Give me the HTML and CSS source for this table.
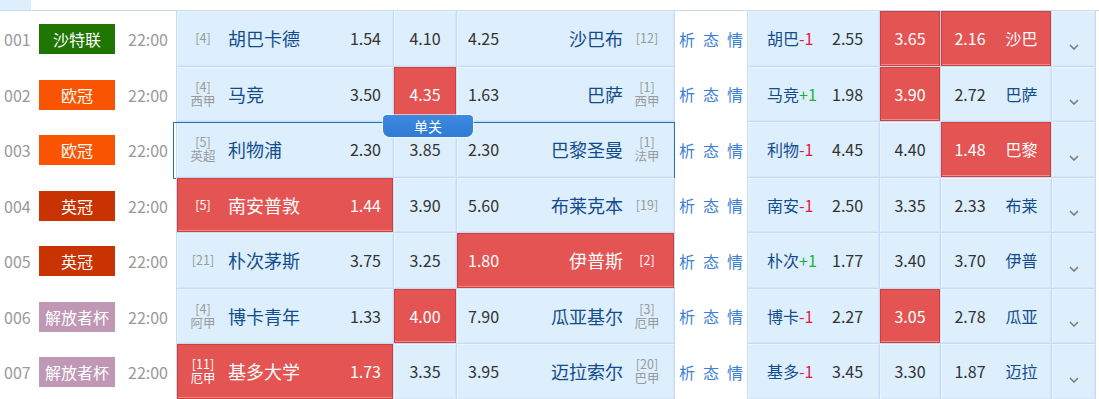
FILE: index.html
```html
<!DOCTYPE html>
<html lang="zh-CN">
<head>
<meta charset="utf-8">
<title>赛程</title>
<link rel="stylesheet" href="styles.css">
</head>
<body>
<div class="page">
  <div class="top"><div class="top-tab"></div></div>
  <div class="board">

    <div class="row">
      <div class="num">001</div>
      <div class="league"><span class="badge lg-green">沙特联</span></div>
      <div class="time">22:00</div>
      <div class="cell home"><span class="rank"><i>[4]</i></span><span class="team">胡巴卡德</span><span class="odds">1.54</span></div>
      <div class="cell draw">4.10</div>
      <div class="cell away"><span class="odds">4.25</span><span class="team">沙巴布</span><span class="rank"><i>[12]</i></span></div>
      <div class="links"><a>析</a><a>态</a><a>情</a></div>
      <div class="cell hh"><span class="hname">胡巴<em class="neg">-1</em></span><span>2.55</span></div>
      <div class="cell hdraw red">3.65</div>
      <div class="cell haway red"><span>2.16</span><span class="hteam">沙巴</span></div>
      <div class="cell more"><svg width="10" height="6" viewBox="0 0 10 6"><polyline points="1,1 5,5 9,1"/></svg></div>
    </div>

    <div class="row">
      <div class="num">002</div>
      <div class="league"><span class="badge lg-orange">欧冠</span></div>
      <div class="time">22:00</div>
      <div class="cell home"><span class="rank"><i>[4]</i><i>西甲</i></span><span class="team">马竞</span><span class="odds">3.50</span></div>
      <div class="cell draw red">4.35</div>
      <div class="cell away"><span class="odds">1.63</span><span class="team">巴萨</span><span class="rank"><i>[1]</i><i>西甲</i></span></div>
      <div class="links"><a>析</a><a>态</a><a>情</a></div>
      <div class="cell hh"><span class="hname">马竞<em class="pos">+1</em></span><span>1.98</span></div>
      <div class="cell hdraw red">3.90</div>
      <div class="cell haway"><span>2.72</span><span class="hteam">巴萨</span></div>
      <div class="cell more"><svg width="10" height="6" viewBox="0 0 10 6"><polyline points="1,1 5,5 9,1"/></svg></div>
    </div>

    <div class="row selected">
      <div class="num">003</div>
      <div class="league"><span class="badge lg-orange">欧冠</span></div>
      <div class="time">22:00</div>
      <div class="cell home"><span class="rank"><i>[5]</i><i>英超</i></span><span class="team">利物浦</span><span class="odds">2.30</span></div>
      <div class="cell draw">3.85</div>
      <div class="cell away"><span class="odds">2.30</span><span class="team">巴黎圣曼</span><span class="rank"><i>[1]</i><i>法甲</i></span></div>
      <div class="links"><a>析</a><a>态</a><a>情</a></div>
      <div class="cell hh"><span class="hname">利物<em class="neg">-1</em></span><span>4.45</span></div>
      <div class="cell hdraw">4.40</div>
      <div class="cell haway red"><span>1.48</span><span class="hteam">巴黎</span></div>
      <div class="cell more"><svg width="10" height="6" viewBox="0 0 10 6"><polyline points="1,1 5,5 9,1"/></svg></div>
      <div class="sel-frame"></div>
      <div class="single">单关</div>
    </div>

    <div class="row">
      <div class="num">004</div>
      <div class="league"><span class="badge lg-brick">英冠</span></div>
      <div class="time">22:00</div>
      <div class="cell home red"><span class="rank"><i>[5]</i></span><span class="team">南安普敦</span><span class="odds">1.44</span></div>
      <div class="cell draw">3.90</div>
      <div class="cell away"><span class="odds">5.60</span><span class="team">布莱克本</span><span class="rank"><i>[19]</i></span></div>
      <div class="links"><a>析</a><a>态</a><a>情</a></div>
      <div class="cell hh"><span class="hname">南安<em class="neg">-1</em></span><span>2.50</span></div>
      <div class="cell hdraw">3.35</div>
      <div class="cell haway"><span>2.33</span><span class="hteam">布莱</span></div>
      <div class="cell more"><svg width="10" height="6" viewBox="0 0 10 6"><polyline points="1,1 5,5 9,1"/></svg></div>
    </div>

    <div class="row">
      <div class="num">005</div>
      <div class="league"><span class="badge lg-brick">英冠</span></div>
      <div class="time">22:00</div>
      <div class="cell home"><span class="rank"><i>[21]</i></span><span class="team">朴次茅斯</span><span class="odds">3.75</span></div>
      <div class="cell draw">3.25</div>
      <div class="cell away red"><span class="odds">1.80</span><span class="team">伊普斯</span><span class="rank"><i>[2]</i></span></div>
      <div class="links"><a>析</a><a>态</a><a>情</a></div>
      <div class="cell hh"><span class="hname">朴次<em class="pos">+1</em></span><span>1.77</span></div>
      <div class="cell hdraw">3.40</div>
      <div class="cell haway"><span>3.70</span><span class="hteam">伊普</span></div>
      <div class="cell more"><svg width="10" height="6" viewBox="0 0 10 6"><polyline points="1,1 5,5 9,1"/></svg></div>
    </div>

    <div class="row">
      <div class="num">006</div>
      <div class="league"><span class="badge lg-mauve">解放者杯</span></div>
      <div class="time">22:00</div>
      <div class="cell home"><span class="rank"><i>[4]</i><i>阿甲</i></span><span class="team">博卡青年</span><span class="odds">1.33</span></div>
      <div class="cell draw red">4.00</div>
      <div class="cell away"><span class="odds">7.90</span><span class="team">瓜亚基尔</span><span class="rank"><i>[3]</i><i>厄甲</i></span></div>
      <div class="links"><a>析</a><a>态</a><a>情</a></div>
      <div class="cell hh"><span class="hname">博卡<em class="neg">-1</em></span><span>2.27</span></div>
      <div class="cell hdraw red">3.05</div>
      <div class="cell haway"><span>2.78</span><span class="hteam">瓜亚</span></div>
      <div class="cell more"><svg width="10" height="6" viewBox="0 0 10 6"><polyline points="1,1 5,5 9,1"/></svg></div>
    </div>

    <div class="row">
      <div class="num">007</div>
      <div class="league"><span class="badge lg-mauve">解放者杯</span></div>
      <div class="time">22:00</div>
      <div class="cell home red"><span class="rank"><i>[11]</i><i>厄甲</i></span><span class="team">基多大学</span><span class="odds">1.73</span></div>
      <div class="cell draw">3.35</div>
      <div class="cell away"><span class="odds">3.95</span><span class="team">迈拉索尔</span><span class="rank"><i>[20]</i><i>巴甲</i></span></div>
      <div class="links"><a>析</a><a>态</a><a>情</a></div>
      <div class="cell hh"><span class="hname">基多<em class="neg">-1</em></span><span>3.45</span></div>
      <div class="cell hdraw">3.30</div>
      <div class="cell haway"><span>1.87</span><span class="hteam">迈拉</span></div>
      <div class="cell more"><svg width="10" height="6" viewBox="0 0 10 6"><polyline points="1,1 5,5 9,1"/></svg></div>
    </div>

  </div>
</div>
</body>
</html>
```

FILE: styles.css
```css
* { box-sizing: border-box; }
html, body { margin: 0; padding: 0; background: #fff; }
body {
  font-family: "Noto Sans CJK SC", "Microsoft YaHei", sans-serif;
  color: #333;
  width: 1099px;
  overflow: hidden;
}
.page { width: 1099px; }
.top {
  height: 11px;
  border-bottom: 1px solid #c6dcf5;
}
.top-tab {
  width: 31px;
  height: 10px;
  background: #ddeefc;
}
.board { display: flex; flex-direction: column; }
.row {
  position: relative;
  display: grid;
  grid-template-columns: 37px 84px 55px 217px 63px 218px 73px 132px 61px 111px 45px;
  height: 55.5px;
}
.num, .time {
  display: flex;
  align-items: center;
  font-size: 16px;
  line-height: 20px;
  color: #999;
}
.num { padding-left: 4px; padding-top: 1px; }
.time { padding-left: 7px; padding-top: 1px; }
.league { display: flex; align-items: center; padding-left: 2px; padding-top: 1px; }
.badge {
  display: flex;
  align-items: center;
  justify-content: center;
  width: 76px;
  height: 30px;
  color: #fff;
  font-size: 16px;
  line-height: 20px;
}
.lg-green { background: #1e7600; }
.lg-orange { background: #f95401; }
.lg-brick { background: #c93301; }
.lg-mauve { background: #c098b6; }

.cell {
  display: flex;
  align-items: center;
  border-left: 1px solid #c6dcf4;
  border-bottom: 1px solid #c6dcf4;
  background: #ddeefc;
  box-shadow: inset 1px 1px 0 #e9f4fe, inset -1px -1px 0 #d3e6fa;
  font-size: 16px;
  line-height: 20px;
  color: #333;
}
.cell.red {
  background: #e35453;
  color: #fff;
  box-shadow: inset 0 0 0 1px #d03e3e, inset 0 -2px 0 #ec8a88;
}
.team { color: #134c8c; font-size: 18px; line-height: 22px; }
.red .team, .red .rank { color: #fff; }
.rank {
  display: flex;
  flex-direction: column;
  align-items: center;
  color: #9a9a9a;
  font-size: 12.5px;
}
.rank i {
  display: block;
  font-style: normal;
  height: 14px;
  line-height: 14px;
  overflow: visible;
}
.home { padding: 0 12px 0 10px; }
.home .rank { width: 32px; }
.home .team { margin-left: 9px; }
.home .odds { margin-left: auto; }
.draw { justify-content: center; }
.away { padding: 0 10px 0 11px; }
.away .team { margin-left: auto; }
.away .rank { width: 34px; margin-left: 7px; }

.links {
  display: flex;
  align-items: center;
  justify-content: center;
  gap: 8px;
  border-left: 1px solid #c6dcf4;
  font-size: 16px;
  line-height: 20px;
}
.links a { color: #3d7fd6; cursor: pointer; }

.hh { padding-left: 19px; }
.hname { width: 65px; color: #134c8c; }
.hname em { font-style: normal; }
.neg { color: #e8163f; }
.pos { color: #1fae3c; }
.hdraw { justify-content: center; }
.haway { justify-content: center; gap: 20px; }
.hteam { color: #134c8c; }
.red .hteam { color: #fff; }
.more {
  justify-content: center;
  align-items: flex-end;
  padding-bottom: 16px;
  border-right: 1px solid #c6dcf4;
}
.more svg polyline { fill: none; stroke: #7d7d7d; stroke-width: 1.6; }

.sel-frame {
  position: absolute;
  left: 173px;
  top: 0;
  width: 502px;
  height: 57px;
  border: 1px solid #2d6db6;
  pointer-events: none;
}
.single {
  position: absolute;
  left: 383px;
  top: -7px;
  width: 90px;
  height: 22px;
  background: linear-gradient(#3d8ae0, #2f7bd6);
  color: #fff;
  font-size: 14px;
  line-height: 22px;
  text-align: center;
  border-radius: 4px 4px 7px 7px;
  box-shadow: 0 0 0 1px rgba(255,255,255,.6);
}
```
